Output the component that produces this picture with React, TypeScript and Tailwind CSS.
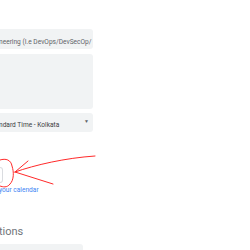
import React from "react";

export default function App() {
  return (
    <div
      className="relative w-[250px] h-[250px] overflow-hidden bg-white"
      style={{ fontFamily: "Roboto, 'Liberation Sans', sans-serif" }}
    >
      <div className="flex flex-col pt-[29px]">
        <div className="w-[93px] h-[20px] bg-[#f1f3f4] rounded-r-[3px] flex items-end pb-[3px] overflow-hidden">
          <span className="whitespace-nowrap text-[6.6px] leading-none text-[#5f6368] -ml-[1px]">
            neering (I.e DevOps/DevSecOp/
          </span>
        </div>
        <div className="mt-[5px] w-[93px] h-[55px] bg-[#f1f3f4] rounded-r-[3px]" />
        <div className="mt-[4px] w-[93px] h-[19px] bg-[#f1f3f4] rounded-r-[3px] flex items-center justify-between pr-[4px] overflow-hidden">
          <span className="whitespace-nowrap text-[6.6px] leading-none text-[#3c4043] mt-[5px] -ml-[1px]">
            ndard Time - Kolkata
          </span>
          <span className="text-[5px] leading-none text-[#5f6368] -mt-[2px]">▼</span>
        </div>
        <div className="mt-[35px] w-[3px] h-[16px] border border-l-0 border-[#dadce0] rounded-r-[3px]" />
        <div className="mt-[4px] whitespace-nowrap text-[6.6px] leading-none text-[#4285f4] -ml-[1px]">
          your calendar
        </div>
        <div className="mt-[32px] whitespace-nowrap text-[11px] leading-none text-[#70757a] -ml-[1px]">
          tions
        </div>
        <div className="mt-[7px] w-[83px] h-[20px] bg-[#f1f3f4] rounded-r-[3px]" />
      </div>
      <svg
        className="absolute left-0 top-0"
        width="250"
        height="250"
        viewBox="0 0 250 250"
        fill="none"
        stroke="#ff2a2a"
        strokeWidth="1"
        strokeLinecap="round"
      >
        <path d="M0 160 C6 158 11 160 12 166 C14 172 14 180 10 184 C7 188 3 187 0 186" />
        <path d="M15 172 C35 165 65 158 95 156" />
        <path d="M15 172 L28 161" />
        <path d="M15 172 L53 184" />
      </svg>
    </div>
  );
}
